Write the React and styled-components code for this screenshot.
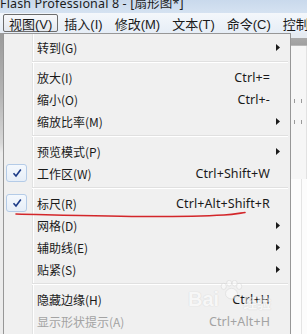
import * as React from 'react'
import styled, { createGlobalStyle } from 'styled-components'

const GlobalStyle = createGlobalStyle`
  html, body {
    margin: 0;
    padding: 0;
    background: #f0f0f0;
    overflow: hidden;
  }
  body {
    font-family: "Noto Sans CJK SC", "Noto Sans", sans-serif;
  }
`

const topMenus = [
  { label: '视图(V)', open: true },
  { label: '插入(I)' },
  { label: '修改(M)' },
  { label: '文本(T)' },
  { label: '命令(C)' },
  { label: '控制(O)' },
]

const items = [
  { label: '转到(G)', sub: true },
  { sep: true },
  { label: '放大(I)', key: 'Ctrl+=' },
  { label: '缩小(O)', key: 'Ctrl+-' },
  { label: '缩放比率(M)', sub: true },
  { sep: true },
  { label: '预览模式(P)', sub: true },
  { label: '工作区(W)', key: 'Ctrl+Shift+W', checked: true },
  { sep: true },
  { label: '标尺(R)', key: 'Ctrl+Alt+Shift+R', checked: true },
  { label: '网格(D)', sub: true },
  { label: '辅助线(E)', sub: true },
  { label: '贴紧(S)', sub: true },
  { sep: true },
  { label: '隐藏边缘(H)', key: 'Ctrl+H' },
  { label: '显示形状提示(A)', key: 'Ctrl+Alt+H', disabled: true },
]

export default function App() {
  return (
    <Screen>
      <GlobalStyle />
      <TitleBar>Flash Professional 8 - [扇形图*]</TitleBar>
      <MenuBar>
        {topMenus.map((m) => (
          <TopItem key={m.label} $open={m.open}>
            {m.label}
          </TopItem>
        ))}
      </MenuBar>
      <Body>
        <LeftStrip />
        <Dropdown>
          {items.map((it, i) =>
            it.sep ? (
              <Separator key={i} />
            ) : (
              <Item key={i} $disabled={it.disabled}>
                <Gutter>{it.checked && <CheckBox><CheckIcon /></CheckBox>}</Gutter>
                <Label>{it.label}</Label>
                <Shortcut>{it.key}</Shortcut>
                <ArrowCell>{it.sub && <Arrow />}</ArrowCell>
              </Item>
            )
          )}
        </Dropdown>
        <Workspace>
          <Toolbar />
          <Ruler>
            <Tick />
            <Tick />
          </Ruler>
          <Stage />
        </Workspace>
      </Body>
      <Underline width="307" height="334" viewBox="0 0 307 334">
        <path
          d="M16 214 C 60 215, 110 216.5, 150 216.5 S 215 215.5, 224 215 S 238 213.5, 245 212.5"
          fill="none"
          stroke="#d3262a"
          strokeWidth="1.6"
          strokeLinecap="round"
        />
      </Underline>
      <Watermark>
        <WmText>Bai</WmText>
        <Paw width="24" height="20" viewBox="0 0 26 22">
          <ellipse cx="5" cy="7" rx="2.8" ry="3.4" />
          <ellipse cx="11" cy="3.5" rx="2.8" ry="3.2" />
          <ellipse cx="17" cy="3.5" rx="2.8" ry="3.2" />
          <ellipse cx="22" cy="7" rx="2.8" ry="3.4" />
          <ellipse cx="13.5" cy="15" rx="6.5" ry="5.8" />
        </Paw>
        <WmCn>经验</WmCn>
      </Watermark>
    </Screen>
  )
}

function CheckIcon() {
  return (
    <svg width="10" height="10" viewBox="0 0 10 10">
      <path d="M1.5 5.2 L4 8 L8.8 1.5" fill="none" stroke="#1b3a87" strokeWidth="1.6" />
    </svg>
  )
}

function Arrow() {
  return (
    <svg width="4" height="7" viewBox="0 0 4 7">
      <path d="M0 0 L4 3.5 L0 7 Z" fill="#1a1a1a" />
    </svg>
  )
}

const Screen = styled.div`
  position: relative;
  width: 307px;
  height: 334px;
  overflow: hidden;
  display: flex;
  flex-direction: column;
  background: #f0f0f0;
`

const TitleBar = styled.div`
  height: 13px;
  flex: none;
  background: linear-gradient(#c9d9ec, #d5e2f1);
  color: #1c1c1c;
  font-family: "Noto Sans", "Noto Sans CJK SC", sans-serif;
  font-size: 12.5px;
  line-height: 8px;
  white-space: nowrap;
  overflow: hidden;
  letter-spacing: 0.15px;
`

const MenuBar = styled.div`
  height: 20px;
  flex: none;
  display: flex;
  align-items: center;
  padding-left: 3px;
  background: linear-gradient(#f4f7fb, #e6edf6);
  white-space: nowrap;
`

const TopItem = styled.div`
  height: 16px;
  display: flex;
  align-items: center;
  padding: 0 5px;
  font-family: "Liberation Sans", "Noto Sans CJK SC", sans-serif;
  font-size: 13px;
  color: #1a1a1a;
  border: 1px solid ${(p) => (p.$open ? '#6d6d6d' : 'transparent')};
  border-radius: 2px;
  background: ${(p) => (p.$open ? 'linear-gradient(#f8f9fb, #e4e8ee)' : 'none')};
`

const Body = styled.div`
  flex: 1;
  display: flex;
  min-height: 0;
`

const LeftStrip = styled.div`
  width: 3px;
  flex: none;
  background: linear-gradient(#9a9a9a 0, #b4b4b4 60px, #d8d8d8 110px, #ececec 120px);
`

const Dropdown = styled.div`
  width: 286px;
  flex: none;
  border: 1px solid #979797;
  border-bottom: none;
  padding: 2px 0 0;
  background:
    linear-gradient(
      to right,
      transparent 28px,
      #e2e3e3 28px,
      #e2e3e3 29px,
      #ffffff 29px,
      #ffffff 30px,
      transparent 30px
    ),
    #f0f0f0;
`

const Item = styled.div`
  height: 22px;
  display: grid;
  grid-template-columns: 33px 1fr auto 20px;
  align-items: center;
  font-size: 12px;
  color: ${(p) => (p.$disabled ? '#a3a3a3' : '#1a1a1a')};
`

const Gutter = styled.div`
  height: 100%;
  display: flex;
  align-items: center;
  padding-left: 2px;
`

const CheckBox = styled.div`
  width: 19px;
  height: 16px;
  display: flex;
  align-items: center;
  justify-content: center;
  border: 1px solid #b4cbe7;
  border-radius: 3px;
  background: linear-gradient(#f4f8fd, #e6eef8);
`

const Label = styled.span`
  white-space: nowrap;
`

const Shortcut = styled.span`
  white-space: nowrap;
  font-family: "Noto Sans", "Noto Sans CJK SC", sans-serif;
  font-size: 12.5px;
  letter-spacing: 0.1px;
`

const ArrowCell = styled.div`
  display: flex;
  align-items: center;
  padding-left: 6px;
`

const Separator = styled.div`
  height: 8px;
  margin: 0 2px 0 28px;
  display: flex;
  flex-direction: column;
  justify-content: center;

  &::before {
    content: '';
    height: 1px;
    background: #e0e0e0;
  }
  &::after {
    content: '';
    height: 1px;
    background: #ffffff;
  }
`

const Workspace = styled.div`
  flex: 1;
  display: flex;
  flex-direction: column;
  background: #fbfbfb;
`

const Toolbar = styled.div`
  height: 13px;
  flex: none;
  background: linear-gradient(#e6ebf1 0, #e6ebf1 5px, #a9a9a9 5px, #a0a0a0 12px, #d0d0d0 13px);
`

const Ruler = styled.div`
  height: 80px;
  flex: none;
  display: flex;
  flex-direction: column;
  gap: 17px;
  padding-top: 53px;
  background: #f6f6f6;
  border-right: 1px solid #e2e2e2;
`

const Tick = styled.div`
  height: 4px;
  width: 100%;
  background: repeating-linear-gradient(to right, transparent 0, transparent 3px, #9a9a9a 3px, #9a9a9a 4px, transparent 4px, transparent 7px);
`

const Stage = styled.div`
  flex: 1;
  background: linear-gradient(to right, #fcfcfc 0, #fcfcfc 10px, #e4e4e4 10px, #e4e4e4 11px, #fcfcfc 11px);
`

const Underline = styled.svg`
  position: absolute;
  left: 0;
  top: 0;
  pointer-events: none;
`

const Watermark = styled.div`
  position: absolute;
  left: 188px;
  top: 280px;
  display: flex;
  align-items: flex-start;
  opacity: 0.5;
  pointer-events: none;
`

const WmText = styled.span`
  margin-top: 8px;
  font-family: "Liberation Sans", sans-serif;
  font-weight: bold;
  font-size: 20px;
  line-height: 22px;
  color: #ffffff;
  text-shadow: 0 0 1px #c8c8c8, 0 0 1px #c8c8c8;
`

const WmCn = styled.span`
  margin-top: 14px;
  font-family: "Noto Sans CJK SC", sans-serif;
  font-weight: bold;
  font-size: 14px;
  line-height: 16px;
  color: #ffffff;
  text-shadow: 0 0 1px #c8c8c8, 0 0 1px #c8c8c8;
`

const Paw = styled.svg`
  fill: #ffffff;
  stroke: #cccccc;
  stroke-width: 0.8;
`
